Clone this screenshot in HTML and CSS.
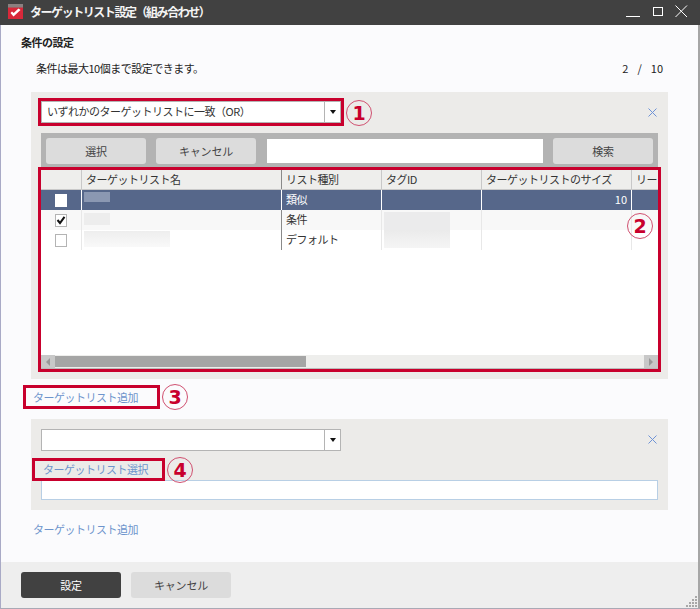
FILE: index.html
```html
<!DOCTYPE html>
<html lang="ja">
<head>
<meta charset="utf-8">
<title>ターゲットリスト設定（組み合わせ）</title>
<link rel="stylesheet" href="styles.css">
</head>
<body>
<div class="window">
  <header class="titlebar">
    <svg class="app-icon" width="15" height="15" viewBox="0 0 15 15"><rect width="15" height="4" fill="#8a8080"/><rect y="4" width="15" height="11" fill="#d8283a"/><rect y="3" width="15" height="1" fill="#a8585e"/><path d="M2.500 9 5.500 12.500 12.500 6 10.500 4.500 5.700 9 4 7.500Z" fill="#fff"/></svg>
    <span class="window-title">ターゲットリスト設定（組み合わせ）</span>
    <svg class="window-controls" width="62" height="13" viewBox="0 0 62 13" fill="none" stroke="#fff"><path d="M0 11.5H14"/><rect x="27.5" y="2.5" width="9" height="8"/><path d="M49.5 .5 61 12M61 .5 49.5 12"/></svg>
  </header>
  <div class="content">
    <main class="main">
      <h1 class="section-title">条件の設定</h1>
      <div class="hint-row"><span>条件は最大10個まで設定できます。</span><span class="count"><span>2</span><span>/</span><span>10</span></span></div>

      <section class="panel panel-first">
        <div class="select-row">
          <div class="select marked"><span>いずれかのターゲットリストに一致（OR）</span><i class="caret-box"><i class="caret"></i></i><b class="mark"></b><b class="num num-1">1</b></div>
          <svg class="remove" width="9" height="9" viewBox="0 0 9 9"><path d="M.5.5l8 8M8.500.5l-8 8" stroke="#6f93d6" fill="none"/></svg>
        </div>
        <div class="toolbar">
          <button class="btn">選択</button>
          <button class="btn">キャンセル</button>
          <div class="search-input"></div>
          <button class="btn">検索</button>
        </div>
        <div class="grid marked">
          <div class="row head">
            <div></div><div>ターゲットリスト名</div><div>リスト種別</div><div>タグID</div><div>ターゲットリストのサイズ</div><div>リー</div>
          </div>
          <div class="row selected">
            <div class="check-cell"><span class="check plain"></span></div><div><span class="blur blur-a"></span></div><div>類似</div><div></div><div class="num-cell">10</div><div></div>
          </div>
          <div class="row alt">
            <div class="check-cell"><span class="check"><svg width="10" height="10" viewBox="0 0 10 10"><path d="M1.500 5 4 8 8.500 1.800" fill="none" stroke="#111" stroke-width="2"/></svg></span></div><div><span class="blur blur-b"></span></div><div>条件</div><div><span class="blur blur-tag-top"></span></div><div></div><div></div>
          </div>
          <div class="row">
            <div class="check-cell"><span class="check"></span></div><div><span class="blur blur-c"></span></div><div>デフォルト</div><div><span class="blur blur-tag-bottom"></span></div><div></div><div></div>
          </div>
          <div class="grid-fill"></div>
          <div class="hscroll">
            <i class="sb-btn"><i class="arrow left"></i></i><i class="thumb"></i><i class="sb-track"></i><i class="sb-btn"><i class="arrow right"></i></i>
          </div>
          <b class="mark"></b><b class="num num-2">2</b>
        </div>
      </section>

      <div class="link-row"><a class="link marked-link">ターゲットリスト追加<b class="num num-3">3</b></a></div>

      <section class="panel panel-second">
        <div class="select-row">
          <div class="select"><span></span><i class="caret-box"><i class="caret"></i></i></div>
          <svg class="remove remove-up" width="9" height="9" viewBox="0 0 9 9"><path d="M.5.5l8 8M8.500.5l-8 8" stroke="#6f93d6" fill="none"/></svg>
        </div>
        <div class="pick-row"><a class="link marked-link pick">ターゲットリスト選択<b class="num num-4">4</b></a></div>
        <div class="target-input"></div>
      </section>

      <div class="add-row"><a class="link">ターゲットリスト追加</a></div>
    </main>
    <footer class="footer">
      <button class="btn primary">設定</button>
      <button class="btn">キャンセル</button>
      <svg class="grip" width="12" height="12" viewBox="0 0 12 12" fill="#a8a8a8"><path d="M9 0h2v2H9zM6 3h2v2H6zM9 3h2v2H9zM3 6h2v2H3zM6 6h2v2H6zM9 6h2v2H9zM0 9h2v2H0zM3 9h2v2H3zM6 9h2v2H6zM9 9h2v2H9z"/></svg>
    </footer>
  </div>
</div>
</body>
</html>
```
FILE: styles.css
```css
* { box-sizing: border-box; }
html, body { margin: 0; height: 100%; }
body {
  width: 700px;
  height: 609px;
  overflow: hidden;
  font-family: "Noto Sans CJK JP", "Noto Sans", sans-serif;
  font-size: 11px;
  letter-spacing: -0.5px;
  color: #333;
  background: #fbfbfd;
}
.window { display: flex; flex-direction: column; height: 609px; }
.titlebar {
  height: 25px;
  flex: none;
  display: flex;
  align-items: center;
  background: #414141;
  color: #fff;
  position: relative;
}
.app-icon { margin: 0 0 2px 8px; flex: none; }
.window-title { margin: 0 0 3px 7px; font-size: 12px; font-weight: 700; letter-spacing: -1.45px; color: #f4f4f4; }
.window-controls { margin-left: auto; margin-right: 12px; margin-bottom: 3px; }

.content {
  flex: 1;
  min-height: 0;
  display: flex;
  flex-direction: column;
  border-left: 1px solid #a9aac6;
  border-right: 2px solid #a6a6a6;
  border-bottom: 1px solid #a9a9b5;
}
.main { flex: 1; padding: 0 30px; }
.section-title { margin: 7px 0 0 -10px; height: 20px; font-size: 11px; font-weight: 700; line-height: 20px; color: #222; }
.hint-row {
  margin: 6px 5px 0 5px;
  height: 20px;
  line-height: 20px;
  display: flex;
  justify-content: space-between;
  color: #222;
}
.count { display: flex; gap: 9px; letter-spacing: 0; }

.panel { background: #ecebe9; padding: 0 10px; position: relative; }
.panel-first { margin-top: 14px; height: 287px; padding-top: 9px; }
.panel-second { height: 91px; padding-top: 10px; }
.select-row { display: flex; justify-content: space-between; align-items: flex-start; height: 22px; }
.remove { margin: 7px 1px 0 0; }
.remove-up { margin-top: 6px; }
.select {
  width: 300px;
  height: 22px;
  display: flex;
  justify-content: space-between;
  background: #fff;
  border: 1px solid #b4b4b4;
  line-height: 19px;
  padding-left: 5px;
  color: #333;
  position: relative;
}
.caret-box { width: 16px; margin: 0; border-left: 1px solid #b4b4b4; display: flex; align-items: center; justify-content: center; }
.caret { width: 0; height: 0; border: 3px solid transparent; border-top: 4px solid #111; border-bottom: 0; }

.marked { position: relative; }
.mark { position: absolute; border: 3px solid #c8002d; inset: -3px; pointer-events: none; }
.select .mark { inset: -4px; }
.num {
  position: absolute;
  width: 26px;
  height: 26px;
  border: 1px solid #d05070;
  border-radius: 50%;
  color: #c8002d;
  font: 700 19px/24px "DejaVu Sans", sans-serif;
  letter-spacing: 0;
  text-align: center;
}
.num-1 { left: 304px; top: -2px; }
.num-2 { left: 586px; top: 43px; }
.num-3 { left: 136px; top: -4px; }
.num-4 { left: 132px; top: -4px; }

.toolbar {
  margin-top: 10px;
  height: 37px;
  background: #b3b3b3;
  padding: 5px 5px 6px;
  display: flex;
  gap: 10px;
}
.btn {
  width: 100px;
  height: 26px;
  flex: none;
  border: 0;
  border-radius: 3px;
  background: #dcdcdc;
  color: #444;
  font: inherit;
  letter-spacing: -0.2px;
  padding: 0;
}
.search-input { flex: 1; margin: 1px 0 1px 1px; background: #fff; }

.grid { height: 199px; background: #fff; display: flex; flex-direction: column; position: relative; }
.row {
  height: 20px;
  flex: none;
  display: grid;
  grid-template-columns: 41px 200px 100px 100px 150px 26px;
  overflow: hidden;
  line-height: 18px;
  white-space: nowrap;
  color: #333;
}
.row > div { border-right: 1px solid #e8e8e8; padding: 0 4px; overflow: hidden; }
.row > div:nth-child(2) { border-right-color: #8a8a8a; }
.row > div:last-child { border-right: 0; }
.head { background: #eeeeec; border-bottom: 1px solid #c9c9c9; }
.head > div { border-right-color: #c8c8c8; }
.selected { background: #56678a; color: #fff; }
.selected > div, .selected > div:nth-child(2) { border-right-color: #fff; }
.alt { background: #f8f8f8; }
.num-cell { text-align: right; letter-spacing: 0; }
.check-cell { display: flex; align-items: center; justify-content: flex-start; padding-left: 14px !important; }
.check {
  width: 12px;
  height: 13px;
  background: #fff;
  border: 1px solid #b4b4b4;
  display: flex;
  align-items: center;
  justify-content: center;
}
.check.plain { border: 0; }
.blur { display: block; filter: blur(0.7px); margin-left: -2px; }
.blur-a { width: 26px; height: 10px; margin-top: 2px; background: #8b98b2; }
.blur-b { width: 26px; height: 12px; margin-top: 3px; background: #ededed; }
.blur-c { width: 86px; height: 16px; margin-top: 1px; background: linear-gradient(#eeeeee, #f9f9f9); }
.blur-tag-top { width: 66px; height: 18px; margin-top: 2px; background: #ebebec; }
.blur-tag-bottom { width: 66px; height: 18px; background: linear-gradient(#ebebeb, #f5f5f5); }
.grid-fill { flex: 1; }
.hscroll { height: 14px; flex: none; display: flex; background: #eeeeec; border-bottom: 1px solid #bbb; }
.hscroll i { display: block; }
.hscroll .sb-btn { width: 14px; background: #c8c8c8; display: flex; align-items: center; justify-content: center; flex: none; }
.thumb { width: 251px; background: #a5a5a5; flex: none; margin: 1px 0; }
.sb-track { flex: 1; }
.arrow { width: 0; height: 0; border: 4px solid transparent; }
.arrow.left { border-right: 4px solid #999; border-left: 0; }
.arrow.right { border-left: 4px solid #999; border-right: 0; }

.link { color: #6d94cc; display: inline-block; position: relative; }
.link-row { height: 40px; display: flex; align-items: center; padding: 0 0 4px 1px; margin-left: -9px; }
.marked-link {
  height: 24px;
  line-height: 18px;
  border: 3px solid #c8002d;
  padding: 0 7px;
  width: 137px;
}
.pick-row { margin-top: 7px; height: 22px; margin-left: -9px; }
.marked-link.pick { height: 23px; width: 133px; padding-left: 8px; line-height: 17px; }
.target-input { height: 20px; background: #fff; border: 1px solid #b8cfe5; }
.add-row { margin: 9px 0 0 2px; height: 20px; line-height: 20px; }

.footer {
  height: 46px;
  flex: none;
  background: #eeeeee;
  display: flex;
  gap: 10px;
  padding: 10px 20px;
  position: relative;
}
.primary { background: #414141; color: #fff; }
.grip { position: absolute; right: 0; bottom: 0; }
```
